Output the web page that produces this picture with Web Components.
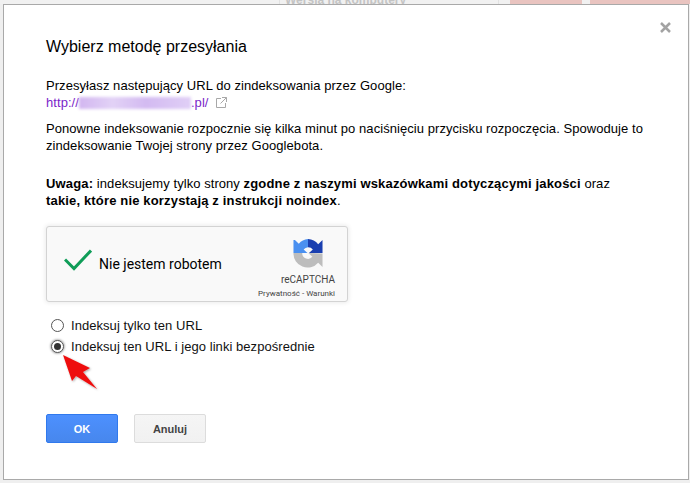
<!DOCTYPE html>
<html lang="pl">
<head>
<meta charset="utf-8">
<title>Wybierz metodę przesyłania</title>
<style>
  html, body { margin: 0; height: 100%; }
  body { background: #efefef; overflow: hidden; font-family: "Liberation Sans", Arial, sans-serif; }
  b { letter-spacing: .16px; }
</style>
</head>
<body>
<backdrop-page>
  <submit-dialog>
    <span slot="title">Wybierz metodę przesyłania</span>
    <p>Przesyłasz następujący URL do zindeksowania przez Google:<br><blurred-link></blurred-link></p>
    <p>Ponowne indeksowanie rozpocznie się kilka minut po naciśnięciu przycisku rozpoczęcia. Spowoduje to zindeksowanie Twojej strony przez Googlebota.</p>
    <p class="note"><b>Uwaga:</b> indeksujemy tylko strony <b>zgodne z naszymi wskazówkami dotyczącymi jakości</b> oraz <b>takie, które nie korzystają z instrukcji noindex</b>.</p>
  </submit-dialog>
</backdrop-page>

<script>
class BackdropPage extends HTMLElement {
  constructor() {
    super();
    this.attachShadow({mode: 'open'}).innerHTML = `
      <style>
        :host { display: block; height: 483px; overflow: hidden; }
        .strip { height: 4px; display: flex; background: #f1f1f1; }
        .tab { margin-left: 279px; width: 220px; height: 4px; border-left: 1px solid #e2e2e2; border-right: 1px solid #e2e2e2;
               color: #c4c4c4; font: bold 12px/4px "Liberation Sans", sans-serif; overflow: hidden; padding-left: 5px; box-sizing: border-box; white-space: nowrap; }
        .tab span { display: block; margin-top: -6px; line-height: 13px; }
        .pink { background: #e9c4c0; height: 4px; }
        .a { margin-left: 11px; width: 72px; }
        .b { margin-left: 8px; flex: 1; }
        .frame { margin: 0 1px 0 3px; }
      </style>
      <div class="strip">
        <div class="tab"><span>Wersja na komputery</span></div>
        <div class="pink a"></div>
        <div class="pink b"></div>
      </div>
      <div class="frame"><slot></slot></div>`;
  }
}
customElements.define('backdrop-page', BackdropPage);

class BlurredLink extends HTMLElement {
  constructor() {
    super();
    this.attachShadow({mode: 'open'}).innerHTML = `
      <style>
        :host { display: inline-flex; align-items: center; color: #7b1fc9; }
        .smear { width: 112px; height: 12px; background: linear-gradient(90deg, #d2b6f0, #e2d2f6 30%, #d3baf1 60%, #e0cff6); filter: blur(1.5px); }
        svg { margin-left: 7px; }
      </style>
      <span>http://</span><span class="smear"></span><span>.pl/</span>
      <svg width="11" height="11" viewBox="0 0 11 11" fill="none" stroke="#a8a8a8" stroke-width="1">
        <path d="M5 1.500H.5v9h9V6"/><path d="M6 .5h4.500V5M10.500 .5L4.500 6.500"/>
      </svg>`;
  }
}
customElements.define('blurred-link', BlurredLink);

class RecaptchaBox extends HTMLElement {
  constructor() {
    super();
    this.attachShadow({mode: 'open'}).innerHTML = `
      <style>
        :host { display: flex; box-sizing: border-box; width: 302px; height: 76px; background: #f9f9f9; border: 1px solid #d3d3d3;
                border-radius: 3px; box-shadow: 0 0 4px 1px rgba(0,0,0,.08); font-family: Roboto, sans-serif; color: #000; letter-spacing: 0; }
        .tick { margin: 22px 0 0 17px; }
        .label { margin: 28px 0 0 7px; font-size: 14px; line-height: 18px; flex: 1; }
        .brand { width: 80px; margin-right: 12px; display: flex; flex-direction: column; align-items: flex-end; }
        .logo { margin: 11px 12px 0 0; }
        .name { font-size: 10px; line-height: 12px; color: #444; margin-top: 6px; }
        .terms { font-size: 8px; line-height: 10px; color: #444; margin-top: 3px; white-space: nowrap; }
      </style>
      <svg class="tick" width="28" height="22" viewBox="0 0 28 22" fill="none">
        <path d="M1 10.500L10 19.500L27 1.500" stroke="#0f9d58" stroke-width="3"/>
      </svg>
      <div class="label">Nie jestem robotem</div>
      <div class="brand">
        <svg class="logo" width="30" height="30" viewBox="0 0 31 31">
          <path d="M2 2L6 6A13 13 0 0 1 15.500 1V9.500A6 6 0 0 0 11 12L15 15.500H.5V2Z" fill="#4a90f0"/>
          <path d="M15.500 1A14 14 0 0 1 26 6.500L30.500 2V15.500H16.500L20.500 12A6 6 0 0 0 15.500 9.500Z" fill="#1a3fb0"/>
          <path d="M.5 15.500H9.500A6 6 0 0 0 20 19.500L16 15.500L30.500 16V30L26 25.500A14.500 14.500 0 0 1 .5 15.500Z" fill="#bdbdbd"/>
        </svg>
        <div class="name">reCAPTCHA</div>
        <div class="terms">Prywatność - Warunki</div>
      </div>`;
  }
}
customElements.define('recaptcha-box', RecaptchaBox);

class RadioOption extends HTMLElement {
  constructor() {
    super();
    const on = this.hasAttribute('checked');
    this.attachShadow({mode: 'open'}).innerHTML = `
      <style>
        :host { display: flex; align-items: center; height: 21px; font: 13px "Liberation Sans", sans-serif; letter-spacing: .05px; color: #111; }
        .dot { box-sizing: border-box; width: 13px; height: 13px; border-radius: 50%; border: 1px solid #555; background: #fff;
               margin-right: 7px; display: flex; align-items: center; justify-content: center;
               box-shadow: ${on ? '0 0 2px 1px #b9b9b9' : 'none'}; }
        .dot i { width: 7px; height: 7px; border-radius: 50%; background: #333; display: ${on ? 'block' : 'none'}; }
      </style>
      <span class="dot"><i></i></span><slot></slot>`;
  }
}
customElements.define('radio-option', RadioOption);

class ActionButton extends HTMLElement {
  constructor() {
    super();
    this.attachShadow({mode: 'open'}).innerHTML = `
      <style>
        :host { display: flex; align-items: center; justify-content: center; box-sizing: border-box; width: 72px; height: 29px;
                border-radius: 2px; font: bold 11px "Liberation Sans", sans-serif; letter-spacing: 0; }
        :host([primary]) { background: linear-gradient(#4d90fe, #4787ed); border: 1px solid #3079ed; color: #fff; }
        :host(:not([primary])) { background: linear-gradient(#f5f5f5, #f1f1f1); border: 1px solid #dcdcdc; color: #444; }
      </style>
      <slot></slot>`;
  }
}
customElements.define('action-button', ActionButton);

class SubmitDialog extends HTMLElement {
  constructor() {
    super();
    this.attachShadow({mode: 'open'}).innerHTML = `
      <style>
        :host { display: block; box-sizing: border-box; height: 476px; background: #fff; border: 1px solid #a9a9a9; position: relative;
                padding: 0 42px; font: 13px/17px "Liberation Sans", sans-serif; color: #000; }
        .close { position: absolute; top: 17px; right: 17px; }
        h1 { margin: 0; padding-top: 32px; font-size: 16px; font-weight: normal; line-height: 20px; }
        .body { margin-top: 20px; letter-spacing: .06px; }
        ::slotted(p) { margin: 0 0 9px; }
        ::slotted(.note) { margin: 21px 0 17px; }
        .radios { margin-top: 13px; margin-left: 5px; }
        .actions { display: flex; gap: 16px; margin-top: 57px; }
        .pointer { position: absolute; left: 56px; top: 347px; }
      </style>
      <svg class="close" width="11" height="11" viewBox="0 0 11 11" stroke="#a3a3a3" stroke-width="2.500">
        <path d="M1 1L10 10M10 1L1 10"/>
      </svg>
      <h1><slot name="title"></slot></h1>
      <div class="body"><slot></slot></div>
      <recaptcha-box></recaptcha-box>
      <div class="radios">
        <radio-option>Indeksuj tylko ten URL</radio-option>
        <radio-option checked>Indeksuj ten URL i jego linki bezpośrednie</radio-option>
      </div>
      <div class="actions">
        <action-button primary>OK</action-button>
        <action-button>Anuluj</action-button>
      </div>
      <svg class="pointer" width="44" height="44" viewBox="0 0 44 44">
        <defs><filter id="s" x="-20%" y="-20%" width="150%" height="150%"><feDropShadow dx="1" dy="1" stdDeviation="1" flood-color="#000" flood-opacity=".35"/></filter></defs>
        <path d="M3 3L30 16L23 20L37 37L16 24L12 29Z" fill="#ee1111" filter="url(#s)"/>
      </svg>`;
  }
}
customElements.define('submit-dialog', SubmitDialog);
</script>
</body>
</html>
